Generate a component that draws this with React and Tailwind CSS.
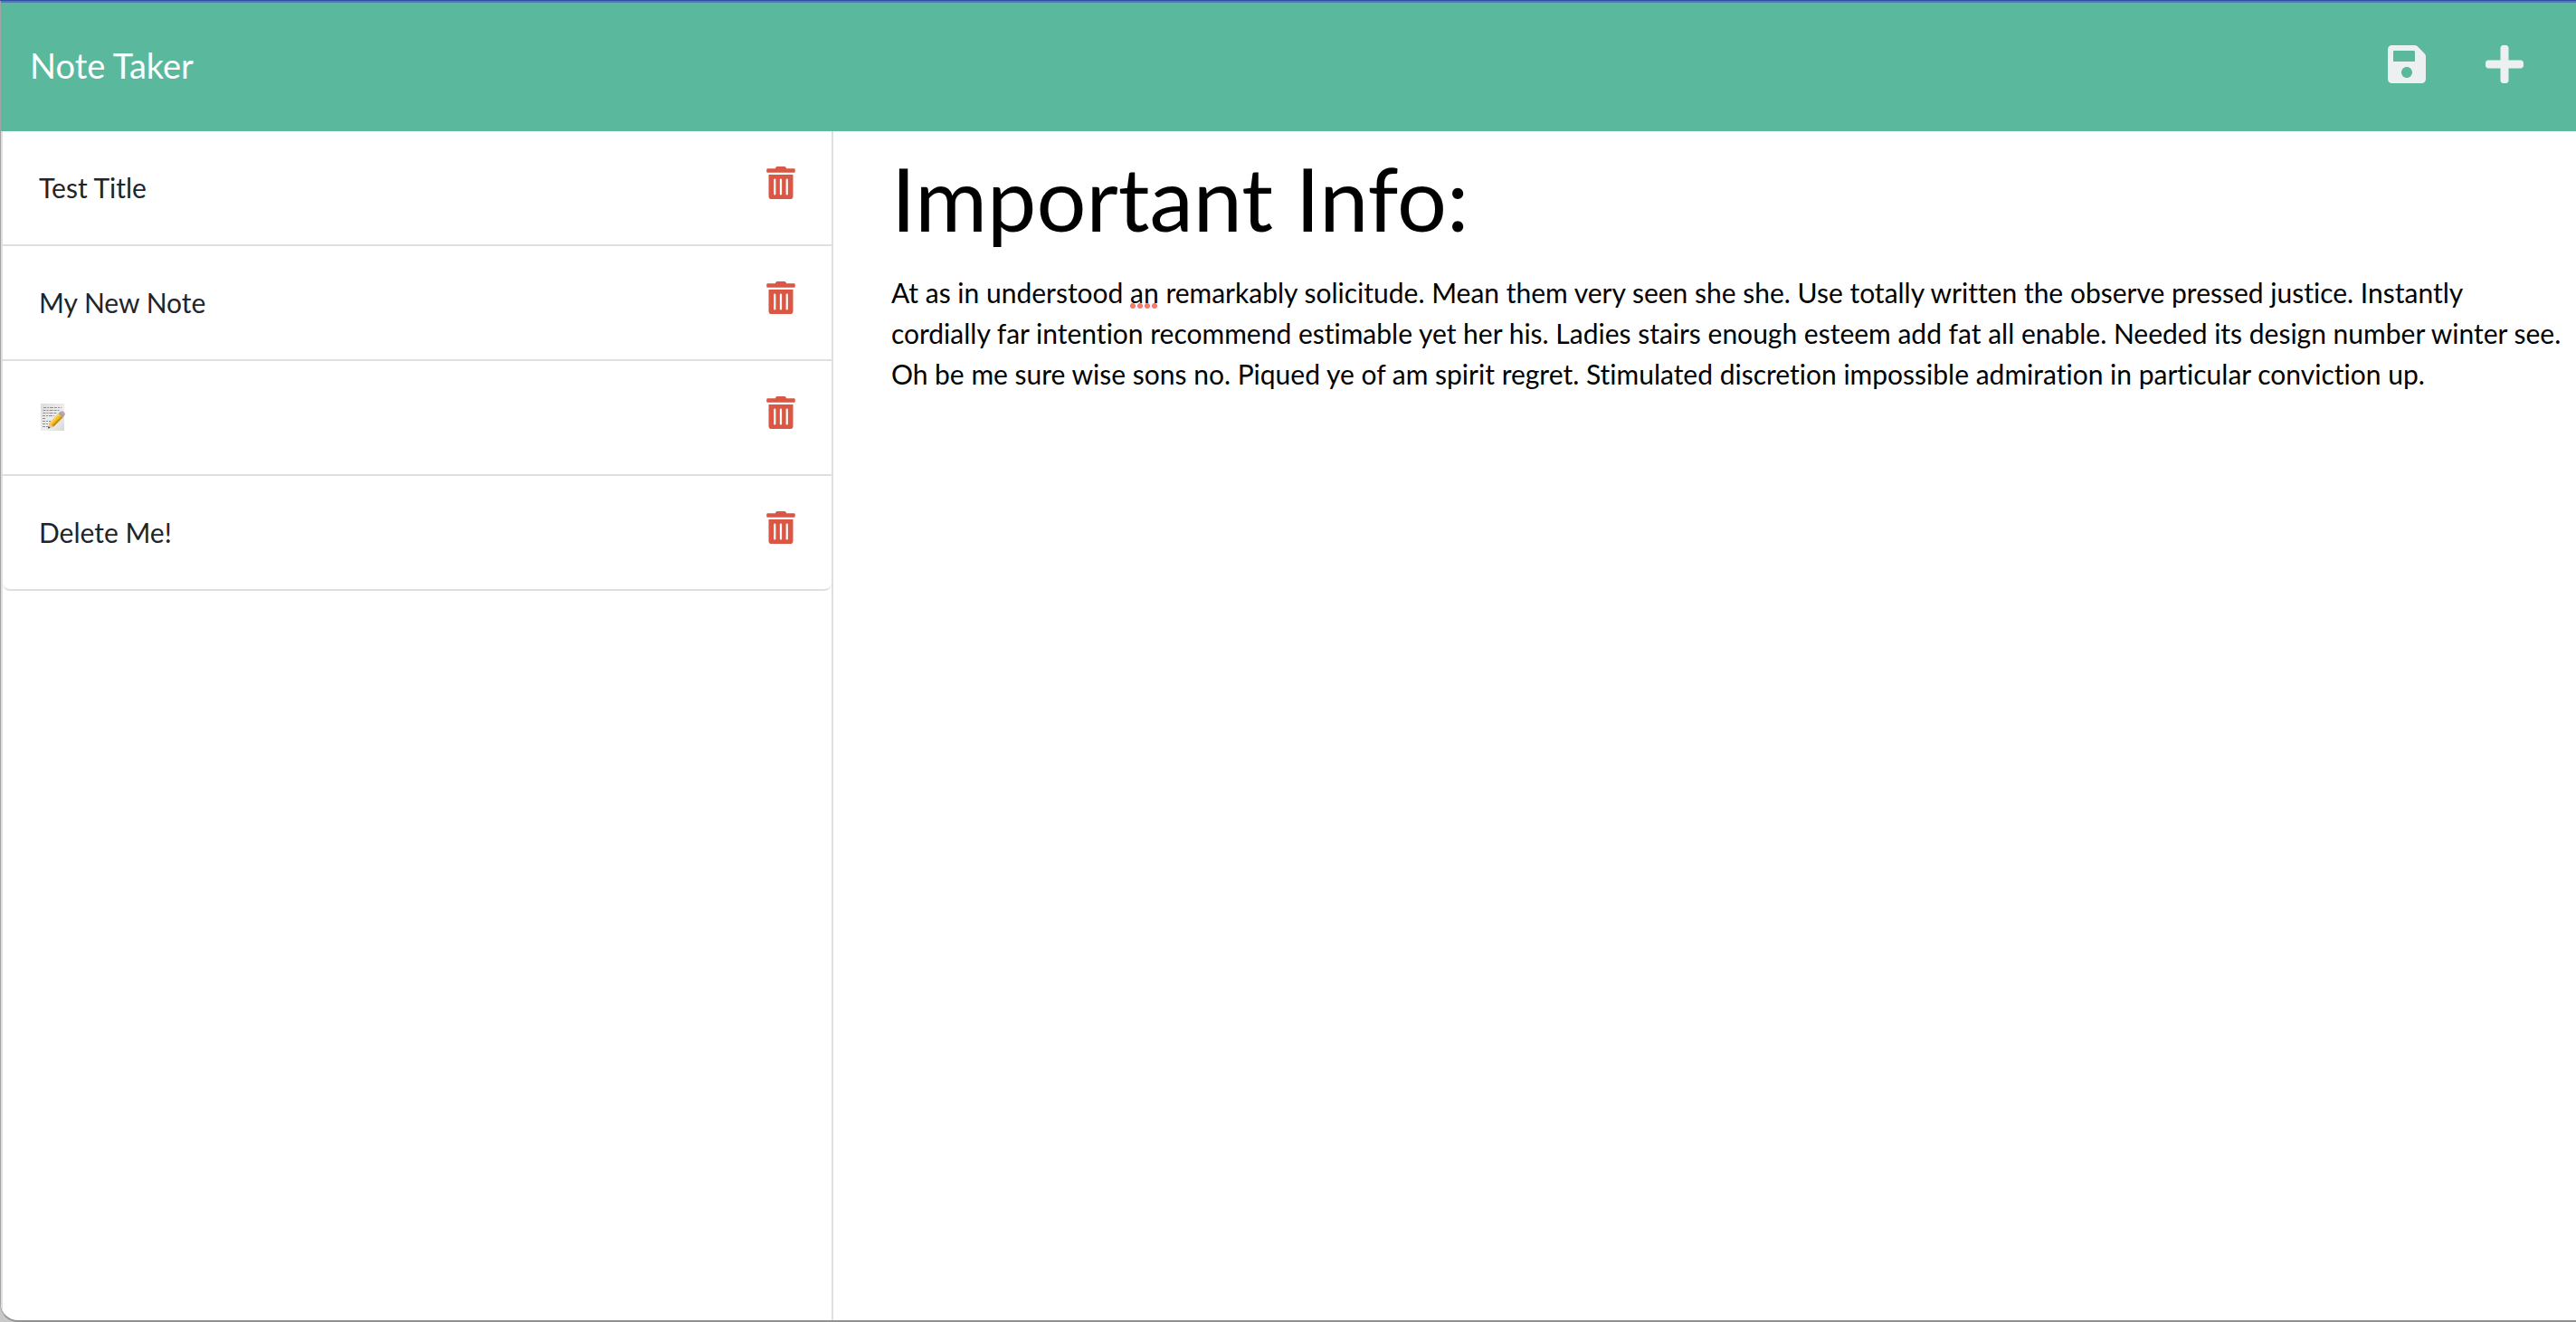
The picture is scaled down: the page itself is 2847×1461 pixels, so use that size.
import { useState } from "react";
import { FaPlus, FaSave, FaTrashAlt } from "react-icons/fa";

const notes = [
  { id: 1, title: "Test Title" },
  { id: 2, title: "My New Note" },
  { id: 3, title: "memo", icon: true },
  { id: 4, title: "Delete Me!" },
];

const body =
  "At as in understood an remarkably solicitude. Mean them very seen she she. Use totally written the observe pressed justice. Instantly cordially far intention recommend estimable yet her his. Ladies stairs enough esteem add fat all enable. Needed its design number winter see. Oh be me sure wise sons no. Piqued ye of am spirit regret. Stimulated discretion impossible admiration in particular conviction up.";

function MemoIcon() {
  return (
    <svg className="ml-0.5 h-8 w-7" viewBox="0 0 28 32" role="img" aria-label="memo">
      <defs>
        <linearGradient id="paper" x1="0" y1="0" x2="1" y2="1">
          <stop offset="0" stopColor="#dcdcdc" />
          <stop offset="0.6" stopColor="#efefef" />
          <stop offset="1" stopColor="#d6d6d6" />
        </linearGradient>
      </defs>
      <rect x="0" y="1" width="26" height="30" fill="url(#paper)" />
      <g stroke="#8f8f8f" strokeWidth="1" strokeDasharray="3 1 2 1 4 1" fill="none">
        <path d="M3 5.5h20M2.500 8.500h19M2.500 11.500h15M2 14.500h13M2 17.500h4M2 20.500h9M2 23.500h8M2 26.500h6" />
      </g>
      <path d="M8 29l2-6L20 12l5 4-10 10z" fill="#6f5a2a" opacity="0.35" />
      <path d="M8 28.500l1.500-6 4.500 4z" fill="#e8c998" />
      <path d="M8 28.500l.6-2.400 1.800 1.600z" fill="#3a3a3a" />
      <path d="M9.500 22.500L19.500 12l5 4L14 26.500z" fill="#f5b81c" />
      <path d="M9.500 22.500L19.500 12l1.700 1.300L11 24z" fill="#fcd34d" />
      <path d="M12.600 25.300L23 14.900l1.500 1.100L14 26.500z" fill="#c98a0c" />
      <path d="M19.500 12l2-2 5 4-2 2z" fill="#8fa9bd" />
      <path d="M21.500 10c1-1 2.500-1 4 .2s1.800 2.600 1 3.800z" fill="#f08a94" />
    </svg>
  );
}

export default function App() {
  const [title, setTitle] = useState("Important Info:");
  const [text, setText] = useState(body);

  return (
    <div className="flex h-screen flex-col bg-[#c9c9c9] font-['Lato',sans-serif] text-[30px] leading-[45px] text-[#212529] [font-variant-ligatures:none]">
      <div className="h-px shrink-0 bg-[#2b539d]" />
      <div className="flex min-h-0 flex-1 flex-col overflow-hidden rounded-bl-[20px] border-b-2 border-l border-b-[#929292] border-l-[#a3a3a3] bg-white">
        <header className="flex h-36 shrink-0 items-center justify-between border-t-2 border-[#5577b3] bg-[#5ab89d] pr-[58px] pb-1 pl-8">
          <a href="#home" className="text-[38px] text-white">
            Note Taker
          </a>
          <div className="flex gap-[66px] pb-0.5 text-[#ecf0f1]">
            <button type="button" aria-label="Save note">
              <FaSave className="h-12 w-[42px]" />
            </button>
            <button type="button" aria-label="New note">
              <FaPlus className="h-12 w-[42px]" />
            </button>
          </div>
        </header>

        <main className="grid min-h-0 flex-1 grid-cols-[32fr_67fr]">
          <aside className="border-x-2 border-[#dfdfdf]">
            <ul>
              {notes.map((note) => (
                <li
                  key={note.id}
                  className="flex items-start justify-between border-b-2 border-[#dfdfdf] px-10 pt-[39px] pb-10 last:rounded-b-lg"
                >
                  <button type="button" className="flex h-[46px] items-center text-left">
                    {note.icon ? <MemoIcon /> : note.title}
                  </button>
                  <button
                    type="button"
                    aria-label={"Delete " + note.title}
                    className="text-[#d95744]"
                  >
                    <FaTrashAlt className="h-9 w-8" />
                  </button>
                </li>
              ))}
            </ul>
          </aside>

          <section className="flex flex-col pt-4 pr-3 pl-16 text-black">
            <input
              aria-label="Note title"
              className="h-[116px] w-full text-[97px] leading-[116px] outline-none"
              value={title}
              onChange={(e) => setTitle(e.target.value)}
            />
            <div className="relative mt-6 flex flex-1">
              <textarea
                aria-label="Note text"
                className="w-full flex-1 resize-none overflow-hidden outline-none"
                spellCheck={false}
                value={text}
                onChange={(e) => setText(e.target.value)}
              />
              <svg
                aria-hidden="true"
                className="pointer-events-none absolute top-[34px] left-[264px] h-1.5 w-8"
                viewBox="0 0 32 6"
                fill="#f4796b"
              >
                <circle cx="3" cy="3" r="3" />
                <circle cx="11" cy="3" r="3" />
                <circle cx="19" cy="3" r="3" />
                <circle cx="27" cy="3" r="3" />
              </svg>
            </div>
          </section>
        </main>
      </div>
    </div>
  );
}
